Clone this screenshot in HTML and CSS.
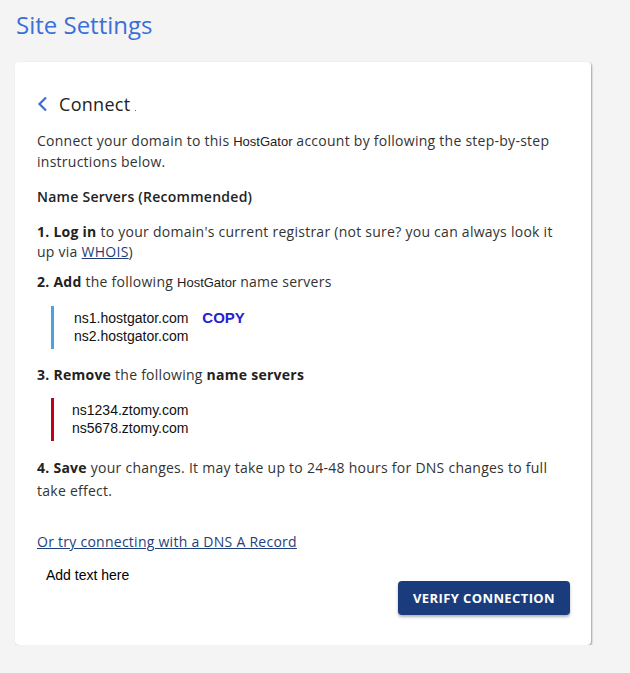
FILE: index.html
```html
<!DOCTYPE html>
<html>
<head>
<meta charset="utf-8">
<link rel="stylesheet" href="styles.css">
</head>
<body>
<h1 class="page-title">Site Settings</h1>
<div class="card">
  <div class="card-head">
    <svg class="back" width="12" height="16" viewBox="0 0 12 16"><path d="M9 1.5 L2.5 8 L9 14.5" fill="none" stroke="#3a6fd8" stroke-width="2.2"/></svg>
    <span class="head-title">Connect</span><span class="dot"></span>
  </div>
  <p class="para">Connect your domain to this <span class="brand">HostGator</span> account by following the step-by-step instructions below.</p>
  <p class="para sub">Name Servers (Recommended)</p>
  <p class="para"><b>1. Log in</b> to your domain's current registrar (not sure? you can always look it up via <a class="ul" href="#">WHOIS</a>)</p>
  <p class="para step2"><b>2. Add</b> the following <span class="brand">HostGator</span> name servers</p>
  <div class="ns ns-blue">
    <div>ns1.hostgator.com <span class="copy">COPY</span></div>
    <div>ns2.hostgator.com</div>
  </div>
  <p class="para step3"><b>3. Remove</b> the following <b>name servers</b></p>
  <div class="ns ns-red">
    <div>ns1234.ztomy.com</div>
    <div>ns5678.ztomy.com</div>
  </div>
  <p class="para step4"><b>4. Save</b> your changes. It may take up to 24-48 hours for DNS changes to full take effect.</p>
  <a class="alt-link" href="#">Or try connecting with a DNS A Record</a>
  <div class="foot">
    <div class="add-text">Add text here</div>
    <button class="verify">VERIFY CONNECTION</button>
  </div>
</div>
</body>
</html>
```
FILE: styles.css
```css
html, body {
  margin: 0;
  padding: 0;
  background: #f4f4f4;
  font-family: "Open Sans", sans-serif;
  color: #333;
}
.page-title {
  margin: 0;
  padding: 8px 0 0 16px;
  height: 54px;
  box-sizing: border-box;
  font-size: 24px;
  font-weight: 400;
  color: #3a6fd8;
  line-height: 34px;
}
.card {
  margin: 8px 0 0 15px;
  width: 576px;
  height: 583px;
  box-sizing: border-box;
  background: #fff;
  border-radius: 4px;
  box-shadow: 1px 1px 2px rgba(0,0,0,0.35);
  padding: 30px 22px 0 22px;
}
.card-head {
  display: flex;
  align-items: center;
  height: 24px;
}
.back { margin-right: 10px; display: block; }
.head-title {
  font-size: 18px;
  font-weight: 500;
  color: #222;
  letter-spacing: 0.3px;
}
.dot {
  width: 1px; height: 1px;
  background: #8a5a2a;
  margin: 12px 0 0 4px;
}
.para {
  margin: 0;
  font-size: 14px;
  line-height: 20px;
  color: #333;
  letter-spacing: 0.26px;
}
.card-head + .para { margin-top: 15px; }
.para b { font-weight: 700; color: #222; }
.sub { margin-top: 15px; font-weight: 600; color: #222; }
.sub + .para { margin-top: 15px; }
.step2 { margin-top: 10px; }
.brand {
  font-family: "Liberation Sans", Arial, sans-serif;
  font-size: 13px;
  color: #222;
  letter-spacing: 0;
}
.ul { color: #1f3f7a; text-decoration: underline; }
.ns {
  font-family: "Liberation Sans", Arial, sans-serif;
  font-size: 14px;
  line-height: 18px;
  color: #111;
  margin: 13px 0 0 14px;
  padding: 3px 0 4px 20px;
}
.ns-blue { border-left: 3px solid #4aa3dd; }
.ns-red { border-left: 3px solid #c3001a; padding-left: 18px; }
.copy {
  font-weight: 700;
  font-size: 15px;
  color: #2323d0;
  margin-left: 10px;
}
.step3 { margin-top: 16px; }
.step4 { margin-top: 15px; line-height: 23px; }
.alt-link {
  display: block;
  margin-top: 30px;
  font-size: 14px;
  line-height: 20px;
  color: #1f3f7a;
  text-decoration: underline;
  letter-spacing: 0.26px;
}
.foot {
  display: flex;
  justify-content: space-between;
  align-items: flex-start;
  margin-top: 14px;
  padding: 0 0 0 9px;
  width: 533px;
  box-sizing: border-box;
}
.add-text {
  font-family: "Liberation Sans", Arial, sans-serif;
  font-size: 14px;
  color: #000;
  line-height: 18px;
}
.verify {
  margin-top: 15px;
  width: 172px;
  height: 34px;
  border: none;
  border-radius: 4px;
  background: #1b3c7c;
  color: #fff;
  font-family: "Open Sans", sans-serif;
  font-weight: 700;
  font-size: 13px;
  letter-spacing: 0.4px;
  box-shadow: 0 2px 3px rgba(0,0,0,0.3);
  padding: 0;
}
```
